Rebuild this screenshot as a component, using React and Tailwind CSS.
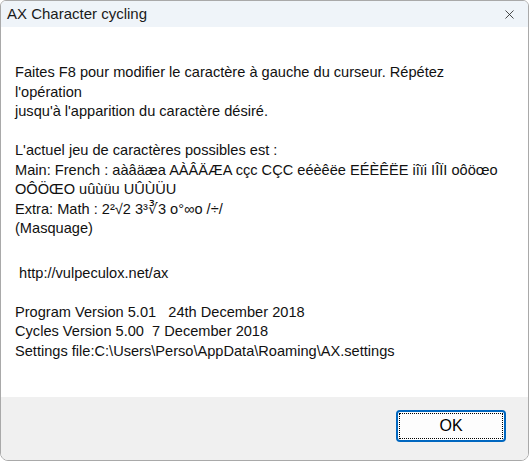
import { X } from 'lucide-react';

const lines1 = [
  'Faites F8 pour modifier le caractère à gauche du curseur. Répétez',
  "l'opération",
  "jusqu'à l'apparition du caractère désiré.",
];

const lines2 = [
  "L'actuel jeu de caractères possibles est :",
  'Main: French : aàâäæa AÀÂÄÆA cçc CÇC eéèêëe EÉÈÊËE iîïi IÎÏI oôöœo',
  'OÔÖŒO uûùüu UÛÙÜU',
  'Extra: Math : 2²√2 3³∛3 o°∞o /÷/',
  '(Masquage)',
];

const lines3 = [
  'Program Version 5.01   24th December 2018',
  'Cycles Version 5.00  7 December 2018',
  'Settings file:C:\\Users\\Perso\\AppData\\Roaming\\AX.settings',
];

const Line = ({ children }) => (
  <div className="h-[19.5px] leading-[19.5px] whitespace-pre">{children}</div>
);

export default function App() {
  return (
    <div className="w-[530px] h-[463px] bg-white" style={{ fontFamily: '"Liberation Sans", Arial, sans-serif' }}>
      <div className="w-[529px] h-[461px] flex flex-col border border-[#a9a9a9] rounded-b-[8px] rounded-t-[6px] overflow-hidden text-[#111]">
        {/* title bar */}
        <div className="h-[26px] shrink-0 bg-[#eff4f9] flex items-center justify-between pl-[6px] pr-[11px]">
          <span className="text-[15px] text-[#1a1a1a]">AX Character cycling</span>
          <X className="w-[15px] h-[15px] text-[#222]" strokeWidth={1.3} />
        </div>

        {/* body */}
        <div className="flex-1 bg-white pt-[36px] pl-[14px] text-[14.6px]">
          {lines1.map((t) => <Line key={t}>{t}</Line>)}
          <Line>{' '}</Line>
          {lines2.map((t) => <Line key={t}>{t}</Line>)}
          <div className="h-[25px]" />
          <Line>{' http://vulpeculox.net/ax'}</Line>
          <Line>{' '}</Line>
          {lines3.map((t) => <Line key={t}>{t}</Line>)}
        </div>

        {/* footer */}
        <div className="h-[63px] shrink-0 bg-[#f0f0f0] flex justify-end items-start pt-[13px] pr-[22px]">
          <button className="w-[110px] h-[32px] rounded-[4px] border-2 border-[#0067c0] bg-[#fdfdfd] p-[1px]">
            <div className="w-full h-full border border-dotted border-black flex items-center justify-center text-[16px] text-black">
              OK
            </div>
          </button>
        </div>
      </div>
    </div>
  );
}
